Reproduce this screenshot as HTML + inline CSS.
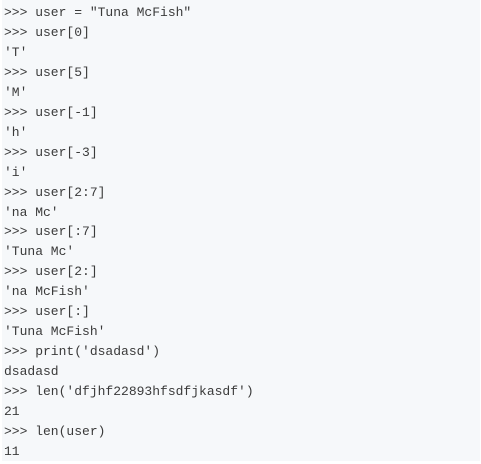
<!DOCTYPE html>
<html><head><style>
html,body{margin:0;padding:0;background:#fff;width:481px;height:464px;overflow:hidden;position:relative}
.b{position:absolute;left:2px;top:0;width:478px;height:461px;background:#f6f8fa}
pre{margin:0;position:absolute;left:4px;top:3px;font-family:"Liberation Mono",monospace;font-size:13px;line-height:19.95px;color:#3a3a3a}
</style></head><body>
<div class="b"></div>
<pre>&gt;&gt;&gt; user = "Tuna McFish"
&gt;&gt;&gt; user[0]
'T'
&gt;&gt;&gt; user[5]
'M'
&gt;&gt;&gt; user[-1]
'h'
&gt;&gt;&gt; user[-3]
'i'
&gt;&gt;&gt; user[2:7]
'na Mc'
&gt;&gt;&gt; user[:7]
'Tuna Mc'
&gt;&gt;&gt; user[2:]
'na McFish'
&gt;&gt;&gt; user[:]
'Tuna McFish'
&gt;&gt;&gt; print('dsadasd')
dsadasd
&gt;&gt;&gt; len('dfjhf22893hfsdfjkasdf')
21
&gt;&gt;&gt; len(user)
11</pre>
</body></html>
